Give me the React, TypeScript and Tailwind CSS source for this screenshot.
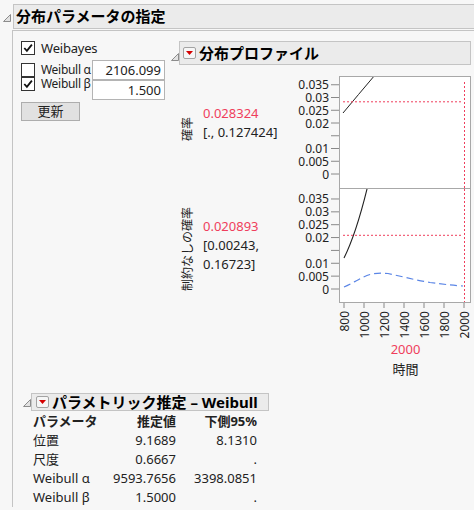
import React from "react";

const RED = "#ef3e5c";

function Tri() {
  return (
    <svg width="8" height="8" viewBox="0 0 8 8" className="shrink-0">
      <path d="M7.5 0.5 V7.5 H0.5 Z" fill="#e2e2e2" stroke="#8c8c8c" strokeWidth="1" />
    </svg>
  );
}

function Menu() {
  return (
    <span className="flex h-[12px] w-[13px] shrink-0 items-center justify-center rounded-[2px] border border-[#a3a3a3] bg-[#f6f6f6]">
      <svg width="7" height="4" viewBox="0 0 7 4">
        <path d="M0 0H7L3.5 4Z" fill="#d40000" />
      </svg>
    </span>
  );
}

function Check({ on }: { on?: boolean }) {
  return (
    <span className="flex h-[14px] w-[14px] shrink-0 items-center justify-center border border-[#333] bg-white">
      {on && (
        <svg width="10" height="10" viewBox="0 0 10 10">
          <path d="M1.3 5 L3.9 7.9 L8.9 1.6" fill="none" stroke="#111" strokeWidth="1.8" />
        </svg>
      )}
    </span>
  );
}

const yLabels = ["0.035", "0.03", "0.025", "0.02", "", "0.01", "0.005", "0"];
const xLabels = [800, 1000, 1200, 1400, 1600, 1800, 2000];
const X = (v: number) => 344 + (v - 800) / 10;

function Axis({ zero, step }: { zero: number; step: number }) {
  return (
    <g>
      {yLabels.map((l, i) => {
        const y = zero - (7 - i) * step;
        return (
          <g key={i}>
            <line x1={331} x2={339} y1={y} y2={y} stroke="#888" strokeWidth="1" />
            {l && (
              <text x={329} y={y} textAnchor="end" dominantBaseline="central" fontSize="12" fill="#222">
                {l}
              </text>
            )}
          </g>
        );
      })}
    </g>
  );
}

function Profile() {
  return (
    <svg width="176" height="270" viewBox="296 70 176 270" className="block">
      <defs>
        <clipPath id="c1">
          <rect x="340" y="77" width="130" height="111" />
        </clipPath>
        <clipPath id="c2">
          <rect x="340" y="189" width="130" height="113" />
        </clipPath>
      </defs>
      <rect x="339.5" y="76.5" width="131" height="112" fill="#fff" stroke="#a8a8a8" />
      <rect x="339.5" y="188.5" width="131" height="114" fill="#fff" stroke="#a8a8a8" />
      <Axis zero={174} step={12.75} />
      <Axis zero={289} step={12.86} />

      <g clipPath="url(#c1)">
        <path d="M343 113 Q358 95 375 75" fill="none" stroke="#222" strokeWidth="1" />
        <line x1="343" x2="463" y1="101.8" y2="101.8" stroke={RED} strokeWidth="1" strokeDasharray="2 2" />
        <line x1="464.5" x2="464.5" y1="82" y2="189" stroke={RED} strokeWidth="1" strokeDasharray="2 2" />
      </g>
      <g clipPath="url(#c2)">
        <path d="M344 258 C350 246 358 226 367.5 187" fill="none" stroke="#222" strokeWidth="1.1" />
        <line x1="343" x2="463" y1="235.3" y2="235.3" stroke={RED} strokeWidth="1" strokeDasharray="2 2" />
        <line x1="464.5" x2="464.5" y1="189" y2="302" stroke={RED} strokeWidth="1" strokeDasharray="2 2" />
        <path
          d="M344 287 C355 282 362 277 370 274.5 C376 273 382 273 388 273.5 C400 276 415 280 430 282.5 C445 284.5 455 285.5 463 286"
          fill="none"
          stroke="#5a85e6"
          strokeWidth="1.2"
          strokeDasharray="7 4"
        />
      </g>

      {xLabels.map((v) => (
        <g key={v}>
          <line x1={X(v)} x2={X(v)} y1={303} y2={308} stroke="#888" strokeWidth="1" />
          <text
            transform={`translate(${X(v)},311) rotate(-90)`}
            textAnchor="end"
            dominantBaseline="central"
            fontSize="12"
            fill="#222"
          >
            {v}
          </text>
        </g>
      ))}
    </svg>
  );
}

const rows = [
  ["位置", "9.1689", "8.1310"],
  ["尺度", "0.6667", "."],
  ["Weibull α", "9593.7656", "3398.0851"],
  ["Weibull β", "1.5000", "."],
];

export default function App() {
  return (
    <div className="h-[510px] w-[474px] overflow-hidden bg-[#f7f7f7] font-['Noto_Sans','Noto_Sans_CJK_JP',sans-serif] text-[13px] text-[#222]">
      {/* top header */}
      <div className="flex items-center pt-[4px] pl-[3px]">
        <span className="mt-[2px]">
          <Tri />
        </span>
        <div className="-mr-px ml-[2px] flex h-[25px] flex-1 items-center border border-[#c4c4c4] bg-[#ebebeb] pl-[2px] text-[15px] leading-none font-bold text-black">
          分布パラメータの指定
        </div>
      </div>

      <div className="ml-[12px] mt-[1px] border-l border-t border-[#c4c4c4]">
        <div className="flex items-start pt-[10px] pl-[8px]">
          {/* left controls */}
          <div className="w-[144px] shrink-0">
            <div className="flex h-[14px] items-center gap-[6px] leading-none">
              <Check on />
              <span className="tracking-[-0.2px]">Weibayes</span>
            </div>
            <div className="mt-[5px] flex items-start">
              <div className="mt-[2px] w-[71px]">
                <div className="flex h-[15px] items-center gap-[6px] text-[12px] leading-none">
                  <Check />
                  <span className="whitespace-nowrap tracking-[-0.3px]">Weibull α</span>
                </div>
                <div className="flex h-[14px] items-center gap-[6px] text-[12px] leading-none">
                  <Check on />
                  <span className="whitespace-nowrap tracking-[-0.3px]">Weibull β</span>
                </div>
              </div>
              <div>
                <div className="flex h-[20px] w-[73px] items-center justify-end border border-[#b4b4b4] bg-white pr-[3px] leading-none">
                  2106.099
                </div>
                <div className="flex h-[20px] w-[73px] items-center justify-end border border-[#b4b4b4] bg-white pr-[3px] leading-none">
                  1.500
                </div>
              </div>
            </div>
            <div className="mt-[2px] flex h-[19px] w-[59px] items-center justify-center border border-[#adadad] bg-[#e1e1e1] leading-none">
              更新
            </div>
          </div>

          {/* profile */}
          <div className="ml-[6px] flex flex-col">
            <div className="flex items-center">
              <span className="mt-[8px]">
                <Tri />
              </span>
              <div className="flex h-[24px] w-[292px] items-center gap-[3px] border border-[#c4c4c4] bg-[#ebebeb] pl-[3px] text-[15px] leading-none font-bold text-black">
                <Menu />
                <span>分布プロファイル</span>
              </div>
            </div>
            <div className="ml-[8px] mt-[5px] flex">
              <div className="w-[117px] shrink-0 pt-[6px]">
                <div className="flex h-[112px] items-start">
                  <div className="w-[24px] shrink-0 pl-[3px] pt-[41px]">
                    <span className="block rotate-180 text-[12px] leading-[12px] [text-orientation:sideways] [writing-mode:vertical-rl]">
                      確率
                    </span>
                  </div>
                  <div className="pt-[28px] leading-[19px]">
                    <div className="text-[#ef3e5c]">0.028324</div>
                    <div>[., 0.127424]</div>
                  </div>
                </div>
                <div className="flex h-[115px] items-start">
                  <div className="w-[24px] shrink-0 pl-[3px] pt-[19px]">
                    <span className="block rotate-180 text-[12px] leading-[12px] [text-orientation:sideways] [writing-mode:vertical-rl]">
                      制約なしの確率
                    </span>
                  </div>
                  <div className="pt-[29px] leading-[19px]">
                    <div className="text-[#ef3e5c]">0.020893</div>
                    <div>[0.00243,</div>
                    <div>0.16723]</div>
                  </div>
                </div>
              </div>
              <div className="w-[176px] shrink-0">
                <Profile />
                <div className="pl-[43px] text-center leading-[18px]">
                  <div className="text-[#ef3e5c]">2000</div>
                  <div className="mt-[2px]">時間</div>
                </div>
              </div>
            </div>
          </div>
        </div>

        {/* parametric estimates */}
        <div className="mt-[15px] pl-[10px]">
          <div className="flex items-center">
            <span className="mt-[2px]">
              <Tri />
            </span>
            <div className="flex h-[18px] w-[238px] items-center gap-[3px] border border-[#c4c4c4] bg-[#ebebeb] pl-[4px] text-[15px] leading-none font-bold text-black">
              <Menu />
              <span className="whitespace-nowrap">パラメトリック推定 – Weibull</span>
            </div>
          </div>
          <div className="mt-[1px] grid grid-cols-[77px_66px_81px] pl-[10px] leading-[19px]">
            <div className="font-bold">パラメータ</div>
            <div className="text-right font-bold">推定値</div>
            <div className="text-right font-bold">下側95%</div>
            {rows.map((r) => (
              <React.Fragment key={r[0]}>
                <div className="whitespace-nowrap">{r[0]}</div>
                <div className="text-right">{r[1]}</div>
                <div className="text-right">{r[2]}</div>
              </React.Fragment>
            ))}
          </div>
        </div>
      </div>
    </div>
  );
}
